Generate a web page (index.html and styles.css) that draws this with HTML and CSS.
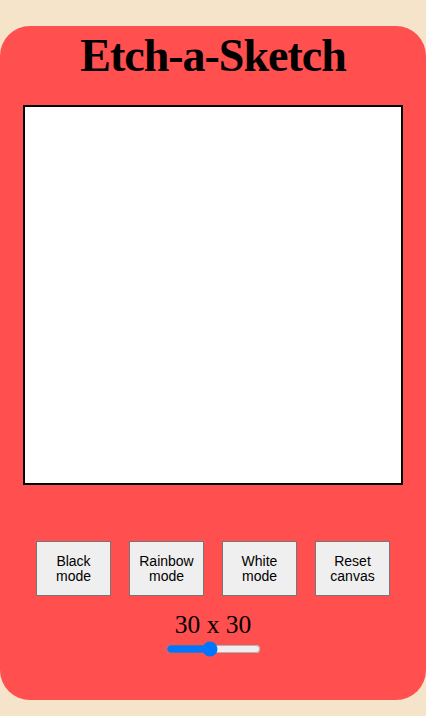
FILE: index.html
```html
<!DOCTYPE html>
<html>
<head>
<meta charset="utf-8">
<link rel="stylesheet" href="styles.css">
</head>
<body>
<main class="toy">
  <h1 class="title">Etch-a-Sketch</h1>
  <div class="canvas"></div>
  <div class="controls">
    <button class="btn">Black<br>mode</button>
    <button class="btn">Rainbow<br>mode</button>
    <button class="btn">White<br>mode</button>
    <button class="btn">Reset<br>canvas</button>
  </div>
  <div class="size-label">30 x 30</div>
  <input class="slider" type="range" min="1" max="64" value="30">
</main>
</body>
</html>
```
FILE: styles.css
```css
html, body {
  margin: 0;
  padding: 0;
}
body {
  background: #f5e3ca;
  padding-top: 26px;
  height: 716px;
  box-sizing: border-box;
  font-family: "Liberation Serif", serif;
}
.toy {
  background: #ff4f4f;
  border-radius: 30px;
  height: 674px;
  box-sizing: border-box;
  padding-top: 2px;
  display: flex;
  flex-direction: column;
  align-items: center;
}
.title {
  margin: 0;
  font-size: 46px;
  letter-spacing: -1px;
  font-weight: bold;
  line-height: 55px;
}
.canvas {
  margin-top: 22px;
  width: 376px;
  height: 376px;
  border: 2px solid #000;
  background: #fff;
}
.controls {
  margin-top: 56px;
  display: flex;
  gap: 18px;
}
.btn {
  width: 75px;
  height: 55px;
  background: #efefef;
  border: 1px solid #767676;
  border-radius: 0;
  font-family: "Liberation Sans", Arial, sans-serif;
  font-size: 14px;
  line-height: 15px;
  color: #000;
  padding: 0;
}
.size-label {
  margin-top: 14px;
  font-size: 25.5px;
  line-height: 29px;
}
.slider {
  width: 95px;
  margin: 2px 0 0 0;
  accent-color: #0075ff;
}
```
